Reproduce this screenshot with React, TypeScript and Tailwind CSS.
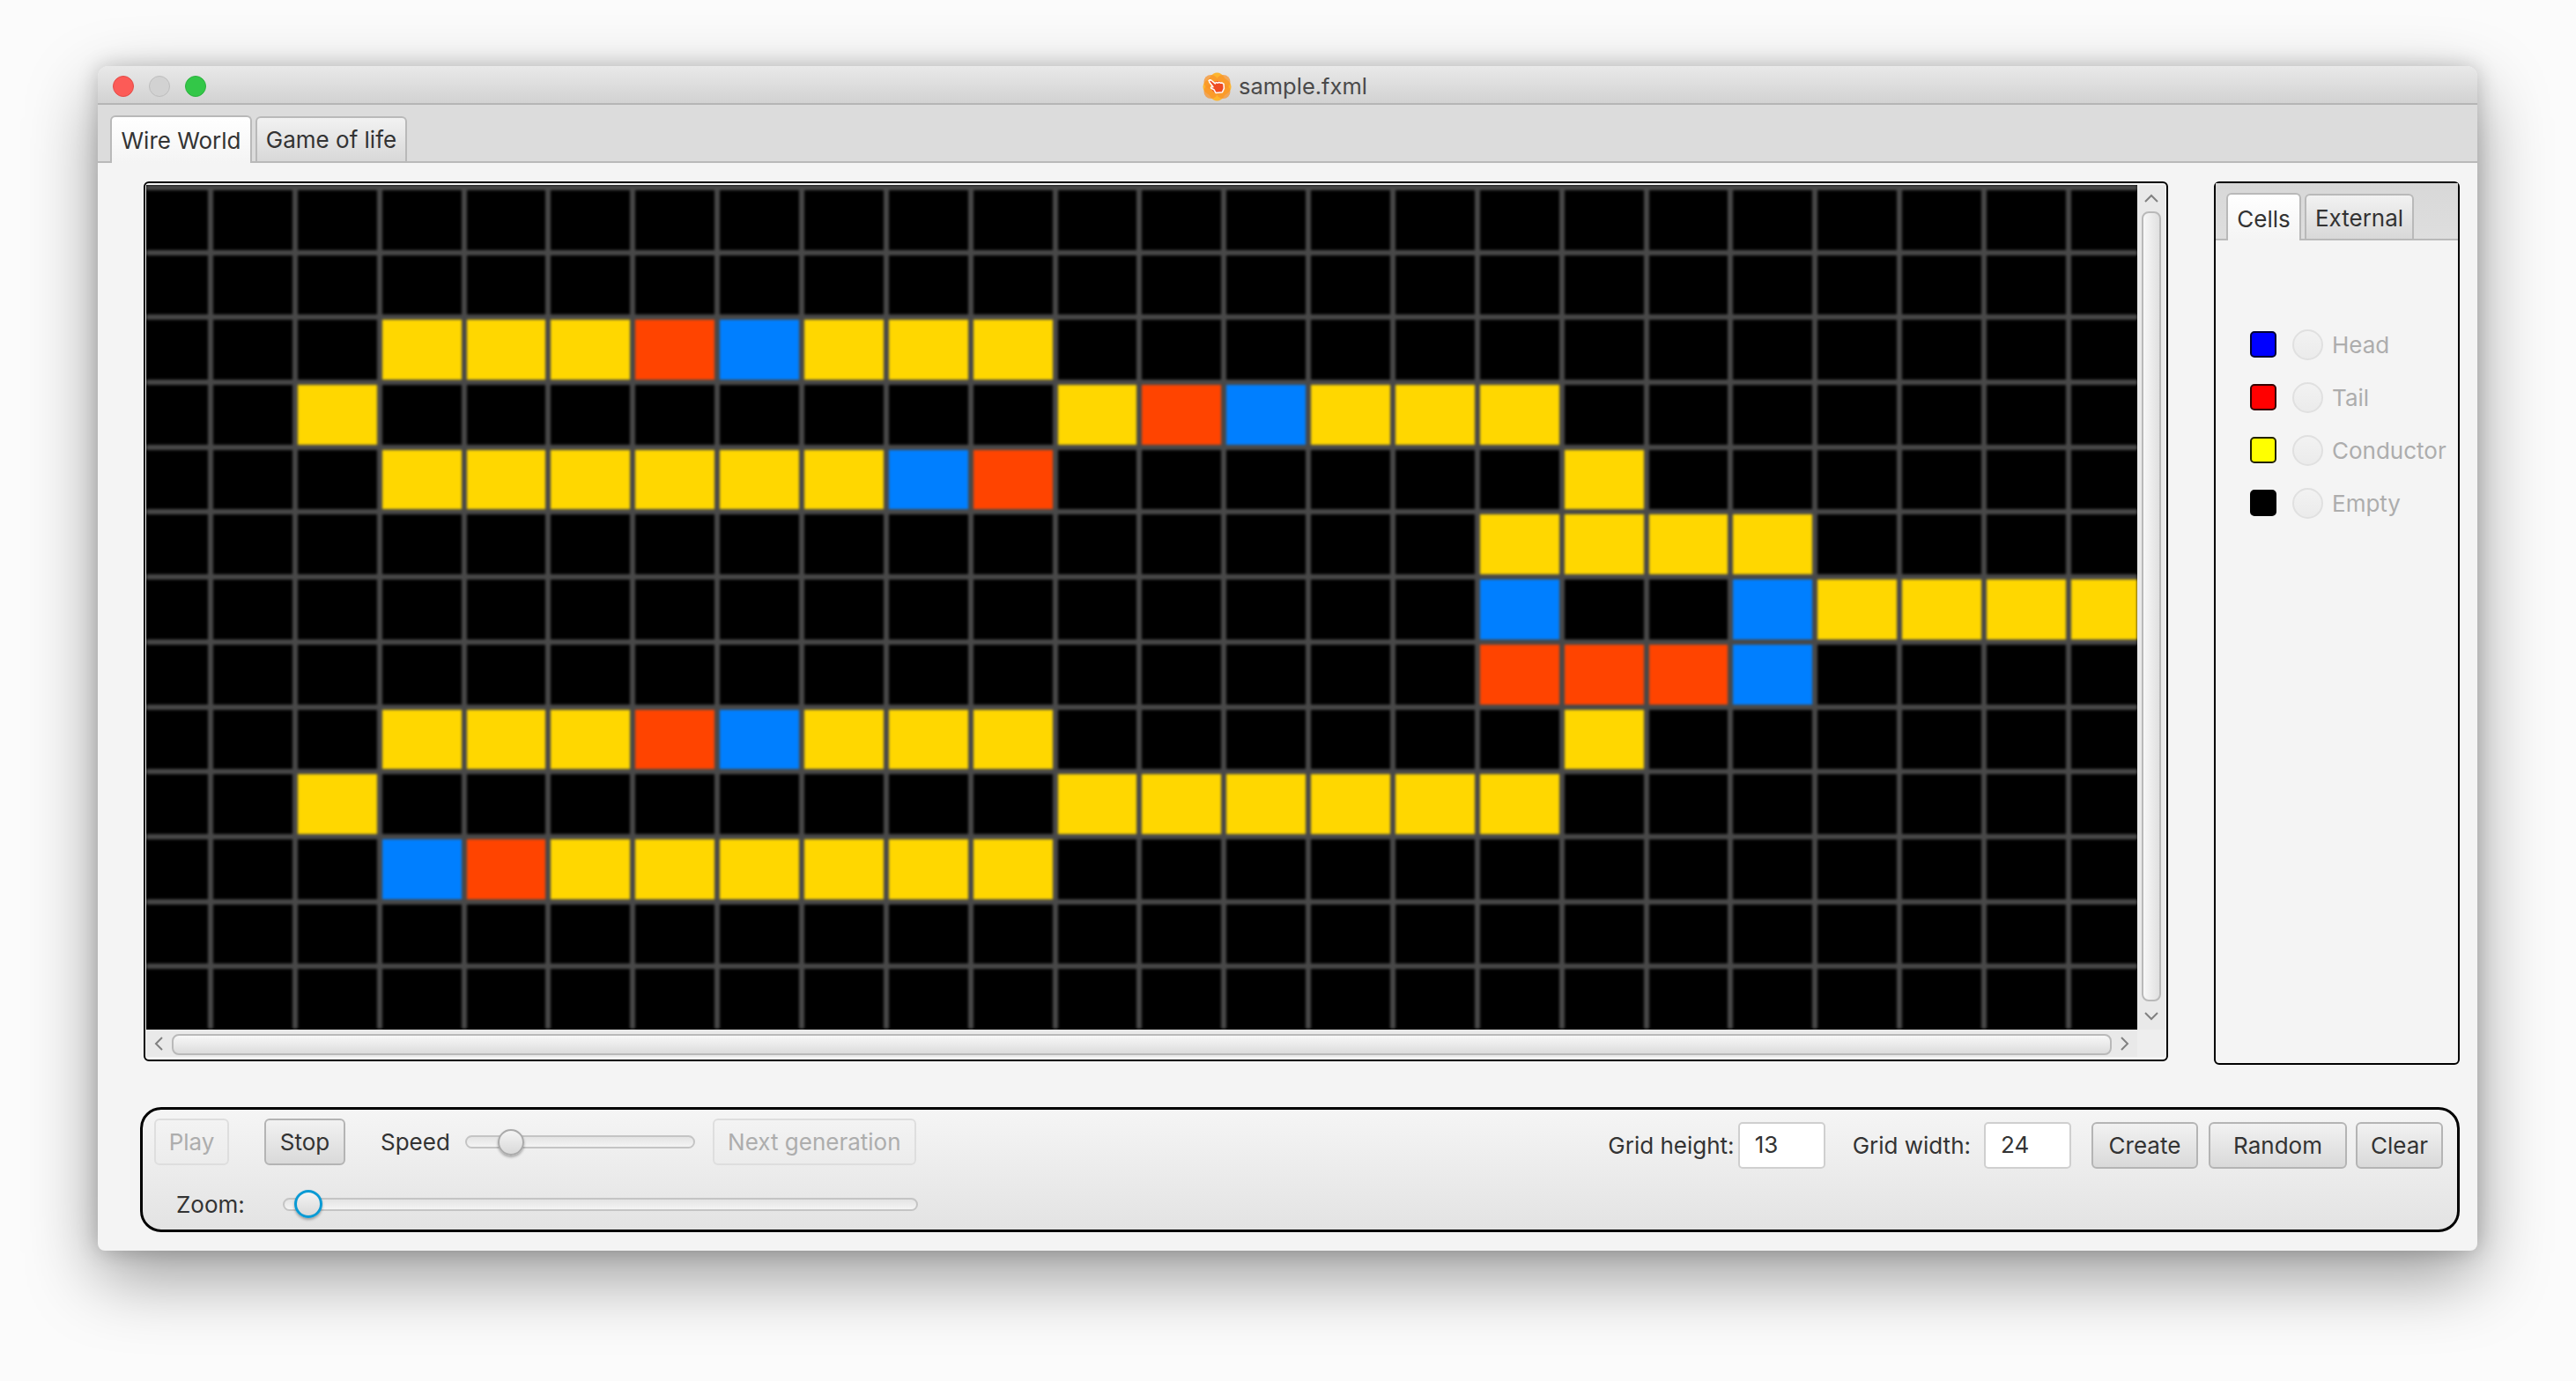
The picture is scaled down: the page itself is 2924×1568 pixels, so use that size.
const yellow = 'bg-[#ffd700]';
const orange = 'bg-[#ff4400]';
const blue = 'bg-[#007fff]';

// one string per row, 24 cols: y conductor, r tail, b head, . empty
const board = [
  '........................',
  '........................',
  '...yyyrbyyy.............',
  '..y........yrbyyy.......',
  '...yyyyyybr......y......',
  '................yyyy....',
  '................b..byyyy',
  '................rrrb....',
  '...yyyrbyyy......y......',
  '..y........yyyyyy.......',
  '...bryyyyyy.............',
  '........................',
  '........................',
];

function cellClass(c: string) {
  if (c === 'y') return yellow;
  if (c === 'r') return orange;
  if (c === 'b') return blue;
  return 'bg-black';
}

function Chevron({ dir }: { dir: 'up' | 'down' | 'left' | 'right' }) {
  const pts = {
    up: '2,10 9,3 16,10',
    down: '2,3 9,10 16,3',
    left: '10,2 3,9 10,16',
    right: '3,2 10,9 3,16',
  }[dir];
  const box = dir === 'up' || dir === 'down' ? 'w-[18px] h-[13px]' : 'w-[13px] h-[18px]';
  const vb = dir === 'up' || dir === 'down' ? '0 0 18 13' : '0 0 13 18';
  return (
    <svg viewBox={vb} className={box} fill="none" stroke="#808080" strokeWidth="2">
      <polyline points={pts} />
    </svg>
  );
}

function AppIcon() {
  return (
    <svg viewBox="0 0 33 33" className="w-[33px] h-[33px]">
      <ellipse cx="16.5" cy="16.5" rx="11" ry="16" fill="#fdb52f" />
      <ellipse cx="16.5" cy="16.5" rx="16" ry="11" fill="#fdb52f" />
      <circle cx="9.5" cy="11" r="8" fill="#f8932a" fillOpacity="0.75" />
      <circle cx="23.5" cy="11" r="8" fill="#f8932a" fillOpacity="0.75" />
      <circle cx="9.5" cy="22" r="8" fill="#f8932a" fillOpacity="0.75" />
      <circle cx="23.5" cy="22" r="8" fill="#f8932a" fillOpacity="0.75" />
      <circle cx="17" cy="17" r="7" fill="#ef5a24" />
      <path
        d="M7 9.5c1-1.2 2.4-1 3.3 0l4 3.4 1-1.3 2.2.6 1-.8 2.2.9 1.4-.3 1.9 1.4.4 5-2 4.4-7.4.6-2-3.6-3-1.4c-.8-.5-.6-1.6.4-1.7l1.6.1-4-5.300c-.6-.8-.7-1.500-.1-2z"
        fill="#ee4b23"
        stroke="#ffffff"
        strokeWidth="1.5"
        strokeLinejoin="round"
      />
    </svg>
  );
}

function Tab({ label, active, w }: { label: string; active?: boolean; w: string }) {
  return (
    <div
      className={`${w} flex items-center justify-center rounded-t-[6px] border-2 border-b-0 border-[#b9b9b9] text-[26px] text-[#333] ${
        active
          ? 'h-[54px] -mb-[2px] z-10 bg-gradient-to-b from-white to-[#f4f4f4]'
          : 'h-[51px] bg-gradient-to-b from-[#f2f2f2] to-[#d8d8d8]'
      }`}
    >
      {label}
    </div>
  );
}

function Btn({ label, w, disabled }: { label: string; w: string; disabled?: boolean }) {
  return (
    <div
      className={`${w} h-[53px] flex items-center justify-center rounded-[6px] border-2 text-[26px] ${
        disabled
          ? 'border-[#dedede] bg-gradient-to-b from-[#f3f3f3] to-[#ececec] text-[#adadad]'
          : 'border-[#b4b4b4] bg-gradient-to-b from-[#f2f2f2] to-[#d9d9d9] text-[#333]'
      }`}
    >
      {label}
    </div>
  );
}

function Field({ value }: { value: string }) {
  return (
    <div className="w-[99px] h-[53px] rounded-[5px] border-2 border-[#cfcfcf] bg-white pl-[17px] pb-[2px] flex items-center text-[26px] text-[#333]">
      {value}
    </div>
  );
}

function Slider({ w, thumbLeft, focused }: { w: string; thumbLeft: string; focused?: boolean }) {
  return (
    <div className={`${w} h-[15px] relative rounded-full border-2 border-[#c4c4c4] bg-gradient-to-b from-[#e4e4e4] to-[#f4f4f4]`}>
      <div
        className={`absolute top-1/2 -translate-y-1/2 ${thumbLeft} rounded-full bg-gradient-to-b from-[#f4f4f4] to-[#d9d9d9] shadow-[0_2px_3px_rgba(0,0,0,0.3)] ${
          focused ? 'w-[32px] h-[32px] border-[3px] border-[#0a9ad4]' : 'w-[30px] h-[30px] border-2 border-[#aaaaaa]'
        }`}
      />
    </div>
  );
}

const cellKinds = [
  { label: 'Head', swatch: 'bg-[#0000ff] border-[#000033]' },
  { label: 'Tail', swatch: 'bg-[#ff0000] border-[#330000]' },
  { label: 'Conductor', swatch: 'bg-[#ffff00] border-[#222200]' },
  { label: 'Empty', swatch: 'bg-black border-black' },
];

export default function App() {
  return (
    <div className="w-[2924px] h-[1568px] bg-[#fbfbfb] pt-[75px] pl-[111px] overflow-hidden font-['Inter',sans-serif]">
      <div className="w-[2701px] h-[1345px] flex flex-col rounded-t-[12px] rounded-b-[8px] bg-[#f4f4f4] overflow-hidden shadow-[0_30px_80px_rgba(0,0,0,0.38),0_0_24px_rgba(0,0,0,0.2)]">
        {/* Title bar */}
        <div className="h-[44px] shrink-0 relative flex items-center justify-center gap-[8px] pt-[4px] pr-[6px] bg-gradient-to-b from-[#e9e9e9] to-[#d2d2d2] border-b-2 border-[#b5b5b5]">
          <div className="absolute left-[17px] top-[11px] flex gap-[17px]">
            <div className="w-[24px] h-[24px] rounded-full bg-[#fc5b57] border border-[#e24b47]" />
            <div className="w-[24px] h-[24px] rounded-full bg-[#d2d2d2] border border-[#bdbdbd]" />
            <div className="w-[24px] h-[24px] rounded-full bg-[#33c748] border border-[#2bb13d]" />
          </div>
          <AppIcon />
          <span className="text-[25.5px] text-[#4a4a4a]">sample.fxml</span>
        </div>

        {/* Main tabs */}
        <div className="h-[66px] shrink-0 flex items-end gap-[4px] pl-[14px] bg-[#dcdcdc] border-b-2 border-[#b9b9b9]">
          <Tab label="Wire World" active w="w-[161px]" />
          <Tab label="Game of life" w="w-[172px]" />
        </div>

        <div className="flex-1 pl-[48px] pt-[21px]">
          <div className="flex gap-[52px] pl-[4px] items-start">
            {/* Scroll pane with the board */}
            <div className="w-[2298px] h-[999px] rounded-[6px] border-2 border-black bg-[#f4f4f4] pt-[2px] pl-px pr-px pb-[3px] flex flex-col">
              <div className="flex">
                <div className="w-[2260px] h-[959px] bg-black overflow-hidden">
                  <div className="grid grid-cols-[70px_repeat(22,89.86px)_75px] auto-rows-[67.7px] gap-[6px] pt-[6px] bg-[#484848] blur-[1.5px]">
                    {board.flatMap((row, y) =>
                      row.split('').map((c, x) => <div key={`${y}-${x}`} className={cellClass(c)} />)
                    )}
                  </div>
                </div>
                <div className="w-[32px] h-[959px] bg-[#e9e9e9] flex flex-col items-center">
                  <div className="h-[30px] flex items-center">
                    <Chevron dir="up" />
                  </div>
                  <div className="flex-1 w-[22px] rounded-[8px] border-2 border-[#b9b9b9] bg-gradient-to-r from-[#f8f8f8] to-[#e0e0e0]" />
                  <div className="h-[32px] flex items-center">
                    <Chevron dir="down" />
                  </div>
                </div>
              </div>
              <div className="flex h-[31px]">
                <div className="w-[2260px] bg-[#e9e9e9] flex items-start">
                  <div className="w-[29px] h-full flex items-center justify-center">
                    <Chevron dir="left" />
                  </div>
                  <div className="w-[2202px] h-[24px] mt-[5px] rounded-[8px] border-2 border-[#b9b9b9] bg-gradient-to-b from-[#f8f8f8] to-[#dcdcdc]" />
                  <div className="w-[29px] h-full flex items-center justify-center">
                    <Chevron dir="right" />
                  </div>
                </div>
                <div className="w-[32px] bg-[#eeeeee]" />
              </div>
            </div>

            {/* Side panel */}
            <div className="w-[279px] h-[1003px] rounded-[6px] border-2 border-black bg-[#f4f4f4]">
              <div className="h-[65px] flex items-end gap-[4px] pl-[12px] bg-gradient-to-b from-[#d8d8d8] to-[#dedede] border-b-2 border-[#b9b9b9]">
                <Tab label="Cells" active w="w-[85px] pt-[2px]" />
                <Tab label="External" w="w-[124px] pt-[2px]" />
              </div>
              <div className="pt-[103px] pl-[39px] flex flex-col gap-[30px]">
                {cellKinds.map((k) => (
                  <div key={k.label} className="h-[30px] flex items-center">
                    <div className={`w-[30px] h-[30px] rounded-[5px] border-2 ${k.swatch}`} />
                    <div className="w-[35px] h-[35px] ml-[18px] rounded-full border-2 border-[#e0e0e0] bg-gradient-to-b from-[#f2f2f2] to-[#ebebeb]" />
                    <span className="ml-[10px] text-[26px] text-[#adadad]">{k.label}</span>
                  </div>
                ))}
              </div>
            </div>
          </div>

          {/* Controls */}
          <div className="w-[2633px] h-[142px] mt-[48px] rounded-[24px] border-[3px] border-black bg-gradient-to-b from-[#f5f5f5] to-[#e3e3e3] flex justify-between pl-[13px] pr-[16px]">
            <div className="flex flex-col pt-[10px]">
              <div className="flex items-center h-[53px]">
                <Btn label="Play" w="w-[85px]" disabled />
                <Btn label="Stop" w="w-[92px] ml-[40px]" />
                <span className="ml-[40px] text-[26px] text-[#333]">Speed</span>
                <div className="ml-[17px]">
                  <Slider w="w-[261px]" thumbLeft="left-[35px]" />
                </div>
                <Btn label="Next generation" w="w-[231px] ml-[20px]" disabled />
              </div>
              <div className="flex items-center h-[36px] mt-[26px]">
                <span className="ml-[25px] text-[26px] text-[#333]">Zoom:</span>
                <div className="ml-[43px]">
                  <Slider w="w-[721px]" thumbLeft="left-[11px]" focused />
                </div>
              </div>
            </div>
            <div className="flex items-center h-[53px] mt-[14px]">
              <span className="text-[26px] text-[#333]">Grid height:</span>
              <div className="ml-[4px]">
                <Field value="13" />
              </div>
              <span className="ml-[31px] mr-[15px] text-[26px] text-[#333]">Grid width:</span>
              <Field value="24" />
              <Btn label="Create" w="w-[121px] ml-[23px]" />
              <Btn label="Random" w="w-[157px] ml-[12px]" />
              <Btn label="Clear" w="w-[99px] ml-[10px]" />
            </div>
          </div>
        </div>
      </div>
    </div>
  );
}
